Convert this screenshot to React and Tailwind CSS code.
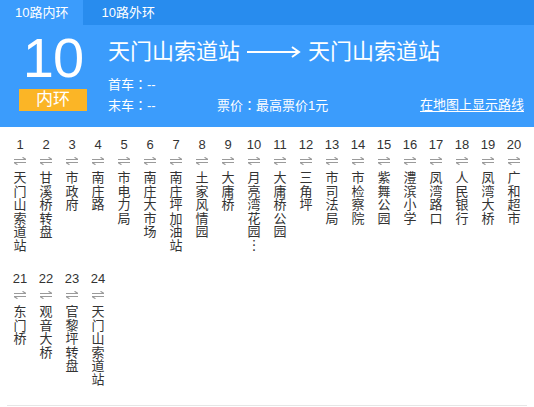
import React from "react";

const stations = [
  "天门山索道站", "甘溪桥转盘", "市政府", "南庄路", "市电力局", "南庄大市场",
  "南庄坪加油站", "土家风情园", "大庸桥", "月亮湾花园︙", "大庸桥公园", "三角坪",
  "市司法局", "市检察院", "紫舞公园", "澧滨小学", "凤湾路口", "人民银行",
  "凤湾大桥", "广和超市", "东门桥", "观音大桥", "官黎坪转盘", "天门山索道站",
];

function SwapIcon() {
  return (
    <svg width="12" height="8" viewBox="0 0 12 8" className="block">
      <path d="M0 2.5H12M12 2.5L8.5 0.3" stroke="#9a9a9a" strokeWidth="1.2" fill="none" />
      <path d="M0 5.5H12M0 5.5L3.5 7.7" stroke="#9a9a9a" strokeWidth="1.2" fill="none" />
    </svg>
  );
}

function LongArrow() {
  return (
    <svg width="56" height="14" viewBox="0 0 56 14" className="block">
      <path d="M1 7H52" stroke="#fff" strokeWidth="2" />
      <path d="M46 2L53 7L46 12" stroke="#fff" strokeWidth="2" fill="none" />
    </svg>
  );
}

function Colon() {
  return <span className="font-['Noto_Sans_CJK_TC',sans-serif]">：</span>;
}

export default function App() {
  const font = { fontFamily: '"Liberation Sans", "Noto Sans CJK SC", sans-serif' };
  return (
    <div className="w-[534px] h-[407px] bg-white overflow-hidden" style={font}>
      <div className="flex h-[25px] bg-[#288cee] text-white text-[13px]">
        <div className="bg-[#3b9cfc] px-[15px] flex items-center">10路内环</div>
        <div className="px-[18px] flex items-center">10路外环</div>
      </div>
      <div className="bg-[#3b9cfc] h-[102px] flex text-white">
        <div className="w-[68px] ml-[19px] flex flex-col items-center">
          <div className="text-[56px] leading-[56px] mt-[5px] tracking-[-1px]">10</div>
          <div className="w-[68px] h-[22px] mt-[3px] bg-[#fbb526] text-[17px] leading-[22px] text-center">内环</div>
        </div>
        <div className="ml-[21px] flex-1 flex flex-col">
          <div className="flex items-center mt-[14px] h-[26px] text-[22px] leading-[26px]">
            <span>天门山索道站</span>
            <span className="mx-[6px]"><LongArrow /></span>
            <span>天门山索道站</span>
          </div>
          <div className="text-[13px] leading-[20px] mt-[9px]">首车<Colon />--</div>
          <div className="flex text-[13px] leading-[20px] pr-[10px]">
            <span className="w-[109px]">末车<Colon />--</span>
            <span>票价<Colon />最高票价1元</span>
            <span className="ml-auto underline underline-offset-2">在地图上显示路线</span>
          </div>
        </div>
      </div>
      <div className="mx-[7px] w-[520px] pt-[10px] border-b border-[#e6e6e6] grid grid-cols-[repeat(20,26px)] text-[#333] h-[279px]">
        {stations.map((name, i) => (
          <div key={i} className="flex flex-col items-center h-[132px]">
            <div className="text-[13px] leading-[16px]">{i + 1}</div>
            <div className="h-[16px] flex items-center"><SwapIcon /></div>
            <div className="mt-[2px] flex flex-col items-center text-[13px] leading-[13.5px]">
              {Array.from(name).map((c, j) => (
                <span key={j}>{c}</span>
              ))}
            </div>
          </div>
        ))}
      </div>
    </div>
  );
}
